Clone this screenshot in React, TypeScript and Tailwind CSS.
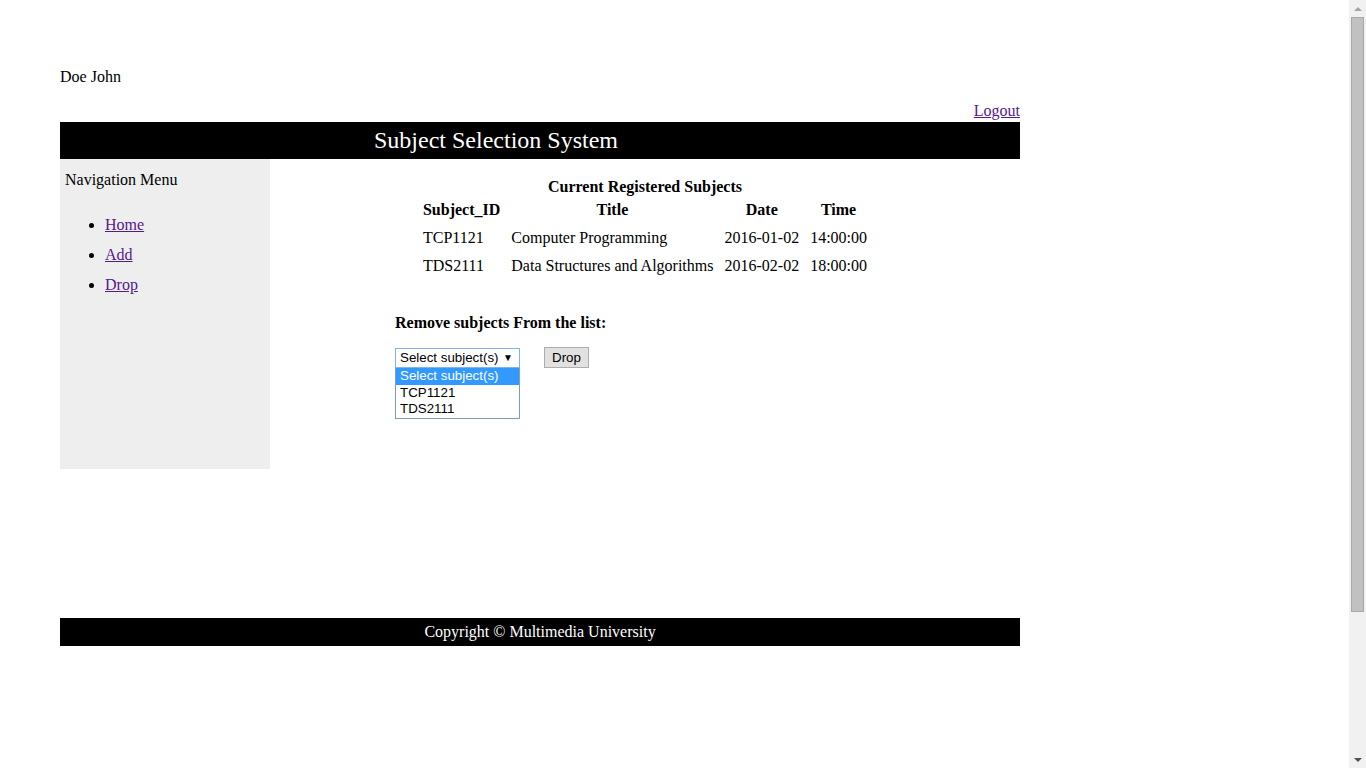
import React from "react";

const subjects = [
  { id: "TCP1121", title: "Computer Programming", date: "2016-01-02", time: "14:00:00" },
  { id: "TDS2111", title: "Data Structures and Algorithms", date: "2016-02-02", time: "18:00:00" },
];

const navLinks = ["Home", "Add", "Drop"];

function Scrollbar() {
  return (
    <div className="w-[17px] h-screen bg-[#f1f1f1] flex flex-col items-center shrink-0">
      <div className="h-[17px] w-full flex items-center justify-center">
        <div className="w-0 h-0 border-l-[4px] border-r-[4px] border-b-[4px] border-l-transparent border-r-transparent border-b-[#a3a3a3]" />
      </div>
      <div className="w-[13px] h-[595px] bg-[#c1c1c1] border border-[#a8a8a8]" />
      <div className="flex-1" />
      <div className="h-[17px] w-full flex items-center justify-center">
        <div className="w-0 h-0 border-l-[4px] border-r-[4px] border-t-[4px] border-l-transparent border-r-transparent border-t-[#505050]" />
      </div>
    </div>
  );
}

function SubjectDropdown() {
  return (
    <div className="flex items-start gap-[24px] font-['Liberation_Sans',Arial,sans-serif] text-[13.33px] leading-[16px]">
      <div className="w-[125px]">
        <div className="h-[20px] border border-[#7eb4ea] bg-white flex items-center justify-between pl-[4px] pr-[6px]">
          <span>Select subject(s)</span>
          <span className="text-[10px]">▼</span>
        </div>
        <div className="border border-[#7f9db9] border-t-0 bg-white pb-[1px]">
          <div className="bg-[#3399ff] text-white pl-[4px] h-[17px] leading-[16px]">Select subject(s)</div>
          <div className="pl-[4px] h-[16px]">TCP1121</div>
          <div className="pl-[4px] h-[16px]">TDS2111</div>
        </div>
      </div>
      <button className="h-[21px] mt-[-1px] px-[7px] bg-[#e1e1e1] border border-[#adadad] text-black">
        Drop
      </button>
    </div>
  );
}

export default function App() {
  return (
    <div className="flex h-screen w-full overflow-hidden bg-white">
      <div className="flex-1 font-['Liberation_Serif','Times_New_Roman',serif] text-[16px] leading-[18px] text-black">
        <div className="ml-[60px] w-[960px] pt-[68px]">
          <div>Doe John</div>
          <div className="text-right mt-[16px] h-[20px]">
            <a href="#" className="underline text-[#551a8b]">Logout</a>
          </div>
          <div className="h-[37px] bg-black text-white text-[24px] leading-[37px] pl-[314px]">
            Subject Selection System
          </div>
          <div className="flex">
            <div className="w-[210px] h-[310px] bg-[#eeeeee] pl-[5px] pt-[12px] shrink-0">
              <div>Navigation Menu</div>
              <ul className="list-disc pl-[40px] mt-[27px]">
                {navLinks.map((l) => (
                  <li key={l} className="mb-[12px]">
                    <a href="#" className="underline text-[#551a8b]">{l}</a>
                  </li>
                ))}
              </ul>
            </div>
            <div className="flex-1 pt-[19px]">
              <table className="mx-auto border-separate border-spacing-[2px]">
                <caption className="font-bold leading-[18px] mb-[-1px]">Current Registered Subjects</caption>
                <thead>
                  <tr>
                    <th className="px-[4.5px] py-[4px] text-center">Subject_ID</th>
                    <th className="px-[4.5px] py-[4px] text-center">Title</th>
                    <th className="px-[4.5px] py-[4px] text-center">Date</th>
                    <th className="px-[4.5px] py-[4px] text-center">Time</th>
                  </tr>
                </thead>
                <tbody>
                  {subjects.map((s) => (
                    <tr key={s.id}>
                      <td className="px-[4.5px] py-[4px]">{s.id}</td>
                      <td className="px-[4.5px] py-[4px]">{s.title}</td>
                      <td className="px-[4.5px] py-[4px]">{s.date}</td>
                      <td className="px-[4.5px] py-[4px]">{s.time}</td>
                    </tr>
                  ))}
                </tbody>
              </table>
              <div className="ml-[125px] mt-[33px]">
                <div className="font-bold">Remove subjects From the list:</div>
                <div className="mt-[16px]">
                  <SubjectDropdown />
                </div>
              </div>
            </div>
          </div>
          <div className="mt-[149px] h-[28px] bg-black text-white text-center leading-[28px]">
            Copyright © Multimedia University
          </div>
        </div>
      </div>
      <Scrollbar />
    </div>
  );
}
